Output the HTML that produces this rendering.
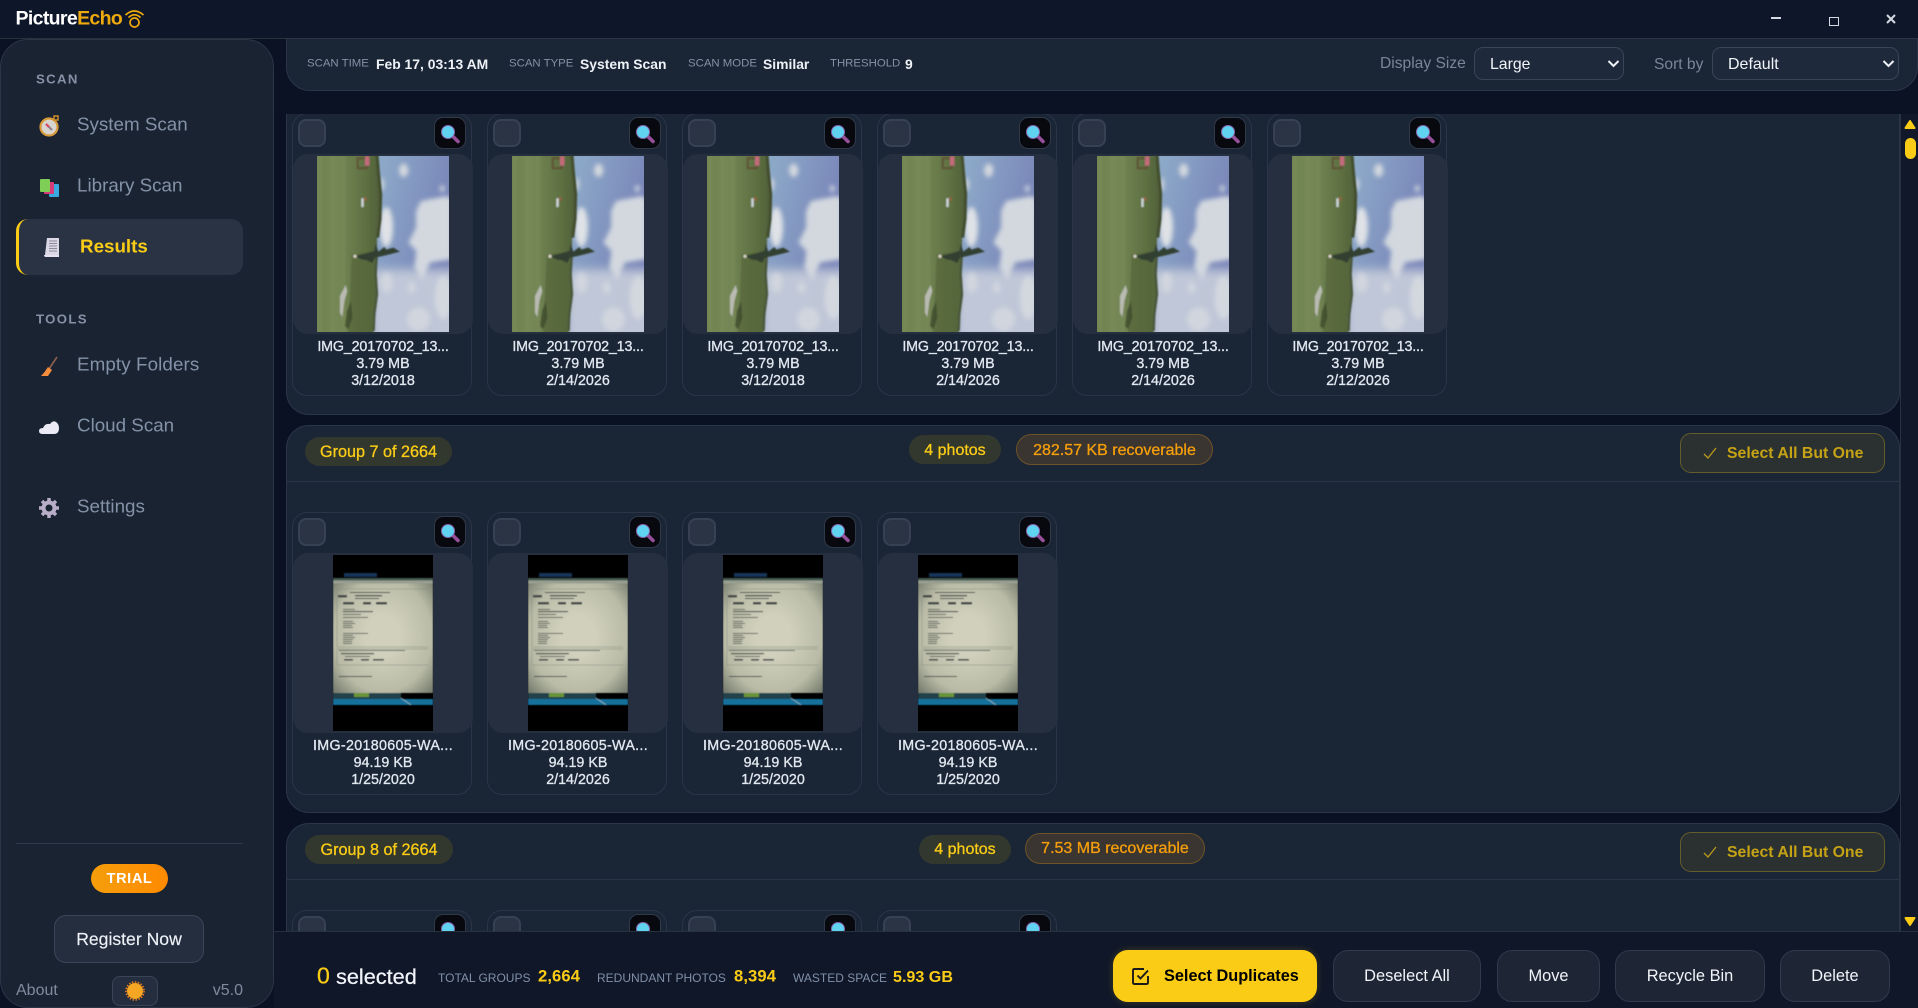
<!DOCTYPE html>
<html lang="en"><head><meta charset="utf-8"><title>PictureEcho</title>
<style>
html,body{margin:0;padding:0;background:#0b1223;width:1918px;height:1008px;overflow:hidden}
*{box-sizing:border-box}
body{font-family:"Liberation Sans",Arial,sans-serif;position:relative}
#frame{position:absolute;left:0;top:0;width:1918px;height:1008px;overflow:hidden}
.t{position:absolute;white-space:nowrap;line-height:1;transform:translateY(-50%)}
.a{position:absolute}
.nav{font-size:18.8px;color:#8492a8}
.lab{font-size:13.2px;font-weight:700;letter-spacing:1.35px;color:#8592a6}
.k{font-size:11.4px;color:#8592a6}
.v{font-size:13.9px;font-weight:700;color:#eef2f7}
.sel{position:absolute;top:47px;height:33px;background:#1e293b;border:1px solid #3a4658;border-radius:9px}
.g{position:absolute;left:286px;width:1614px;height:388px;background:#1a2536;border:1px solid #2a3648;border-radius:23px}
.g:after{content:"";position:absolute;left:0;right:0;top:55px;height:1px;background:#2a3648}
.pill{position:absolute;display:flex;align-items:center;justify-content:center;border-radius:16px;font-size:16px;padding-top:2px;white-space:nowrap;-webkit-text-stroke:.3px currentColor}
.gp{font-size:16.2px}
.py{background:#33382f;color:#facc15}
.po{background:#3a3530;color:#f59e0b;border:1px solid #6d5328}
.sa{position:absolute;width:205px;height:40px;background:#2b3130;border:1px solid #655c2b;border-radius:11px;color:#c6a215;font-size:15.8px;font-weight:700;white-space:nowrap}
.sa span{position:absolute;left:46px;top:20px;transform:translateY(-50%);line-height:1}
.sa svg{position:absolute;left:21px;top:12px}
.c{position:absolute;width:180px;height:283px;border:1px solid #2a3648;border-radius:15px;background:#1a2536}
.cb{position:absolute;left:5px;top:5px;width:28px;height:28px;background:#2a3445;border:2px solid #364254;border-radius:8px}
.z{position:absolute;left:141px;top:3px;width:32px;height:32px;background:#07090f;border:1px solid #30394a;border-radius:9px}
.z svg{position:absolute;left:-1px;top:-1px}
.bx{position:absolute;left:0;top:40px;width:180px;height:180px;background:#252f3f;border-radius:15px;}
.i{position:absolute;top:42px}
.l{position:absolute;left:-10px;width:200px;text-align:center;font-size:14.3px;line-height:17px;height:17px;color:#e2e8f0;-webkit-text-stroke:.3px #e2e8f0;white-space:nowrap}
.n1{letter-spacing:-.17px}
.n2{letter-spacing:.3px}
.b{position:absolute;top:950px;height:52px;background:#1e2535;border:1px solid #2f3a4c;border-radius:15px;color:#f1f5f9;font-size:16.4px;display:flex;align-items:center;justify-content:center;white-space:nowrap}
.s12{font-size:12px;color:#8090a8}
.y{font-size:16.6px;font-weight:700;color:#facc15}
</style></head>
<body>
<div id="frame">
<svg width="0" height="0" style="position:absolute">
<defs>
<filter id="b0" x="-5%" y="-5%" width="110%" height="110%"><feGaussianBlur stdDeviation="2.500"/></filter>
<filter id="b1" x="-30%" y="-30%" width="160%" height="160%"><feGaussianBlur stdDeviation="7"/></filter>
<filter id="b2" x="-30%" y="-30%" width="160%" height="160%"><feGaussianBlur stdDeviation="14"/></filter>
<filter id="b3" x="-5%" y="-5%" width="110%" height="110%"><feGaussianBlur stdDeviation=".5"/></filter>
<linearGradient id="sky" x1="0" y1="0" x2="1" y2=".3"><stop offset="0" stop-color="#b4c1d2"/><stop offset=".4" stop-color="#8fadca"/><stop offset="1" stop-color="#7884b8"/></linearGradient>
<linearGradient id="gr" x1="0" y1="0" x2="1" y2="0"><stop offset="0" stop-color="#6f8350"/><stop offset=".35" stop-color="#748755"/><stop offset=".75" stop-color="#5f7142"/><stop offset="1" stop-color="#4f5f38"/></linearGradient>
<radialGradient id="vg" cx=".5" cy=".5" r=".7"><stop offset=".25" stop-color="#d0d0bc"/><stop offset=".7" stop-color="#b9bba6"/><stop offset="1" stop-color="#737a6c"/></radialGradient>
<symbol id="land" viewBox="0 0 132 176" preserveAspectRatio="none">
<g transform="translate(-2 -1.7) scale(.33333)">
<rect x="0" y="0" width="410" height="540" fill="url(#sky)"/>
<g filter="url(#b2)"><path d="M170 345H430V560H170Z" fill="#c3cad9" opacity=".95"/></g>
<g filter="url(#b1)" fill="#d3d8df">
<ellipse cx="266" cy="48" rx="14" ry="20"/><ellipse cx="382" cy="103" rx="7" ry="10"/>
<path d="M318 140 395 125 410 135V315L345 325 322 378 298 340 304 290 280 265 303 220 303 170Z"/>
<ellipse cx="214" cy="218" rx="20" ry="60" fill="#dfe2e6"/><ellipse cx="200" cy="90" rx="7" ry="20"/>
<ellipse cx="385" cy="430" rx="26" ry="65"/><ellipse cx="290" cy="400" rx="12" ry="18" fill="#d0d5de"/><ellipse cx="215" cy="385" rx="18" ry="30" fill="#d0d5de"/><ellipse cx="310" cy="495" rx="35" ry="36" fill="#d0d5de"/>
</g>
<g filter="url(#b0)">
<path d="M0 0H185L190 50 198 130 196 200 186 250 186 300 182 360 186 420 180 480 175 540H0Z" fill="url(#gr)"/>
<path d="M110 300 184 290 182 420 175 540H100L105 420Z" fill="#55663a" opacity=".7"/>
<path d="M15 0V540M52 0V540M85 0V540" stroke="#8b9b63" stroke-width="14" opacity=".18"/>
<path d="M186 0 190 50 197 120 195 195 188 250" fill="none" stroke="#434e2e" stroke-width="9"/>
<path d="M186 290 182 360 186 420 178 480 176 530" fill="none" stroke="#48553a" stroke-width="7"/>
<path d="M128 12H155V42H128Z" fill="none" stroke="#5f5235" stroke-width="6"/>
<rect x="150" y="6" width="13" height="28" fill="#c46a7c"/>
<rect x="147" y="128" width="8" height="12" fill="#c0583f" opacity=".5"/>
<path d="M120 305 150 298 178 290 182 268 190 292 208 278 214 286 235 280 255 292 225 300 200 306 180 310 172 326 155 318 140 316Z" fill="#333f30"/>
<circle cx="120" cy="306" r="5" fill="#d8d3c7"/>
<rect x="139" y="132" width="7" height="26" fill="#cfd6dc"/>
<path d="M75 425 92 392 97 410 88 440 82 488 75 475Z" fill="#b9bbb2"/>
<path d="M96 470 108 440 112 490 100 525 90 515Z" fill="#3d4a2c" opacity=".8"/>
</g>
</g>
</symbol>
<symbol id="doc" viewBox="0 0 100 176" preserveAspectRatio="none">
<rect width="100" height="176" fill="#000"/>
<g filter="url(#b3)">
<rect x="11" y="18" width="33" height="4" fill="#123458"/>
<rect y="23" width="100" height="115" fill="url(#vg)"/>
<rect y="23" width="100" height="2.500" fill="#445a52"/>
<rect y="25.500" width="100" height="3" fill="#989f90"/>
<path d="M4 34H95M4 34V92H95M4 94H95M4 94V110H95" fill="none" stroke="#858e83" stroke-width=".5"/>
<g fill="#444949">
<rect x="17" y="37" width="40" height="1"/><rect x="5" y="40" width="9" height="2.500"/><rect x="22" y="40" width="27" height="1.300"/><rect x="22" y="43" width="24" height="1"/>
<rect x="10" y="47" width="11" height="2.500"/><rect x="30" y="47" width="8" height="2.500"/><rect x="43" y="47" width="11" height="2.500"/>
<rect x="10" y="54" width="12" height=".8"/><rect x="10" y="56" width="30" height="1.100"/><rect x="10" y="59" width="18" height=".8"/>
<rect x="10" y="62" width="25" height=".8"/><rect x="10" y="66" width="10" height=".8"/><rect x="10" y="68" width="12" height=".8"/><rect x="10" y="70" width="9" height=".8"/><rect x="10" y="72" width="10" height=".8"/>
<rect x="10" y="78" width="25" height=".8"/><rect x="10" y="80" width="10" height=".8"/><rect x="10" y="82" width="12" height=".8"/><rect x="10" y="84" width="10" height=".8"/><rect x="10" y="86" width="9" height=".8"/><rect x="10" y="88" width="9" height=".8"/>
<rect x="6" y="95" width="66" height=".8"/><rect x="8" y="98" width="33" height="1.200"/><rect x="12" y="101" width="25" height=".8"/>
<rect x="11" y="104" width="9" height="1.600"/><rect x="28" y="104" width="8" height="1.600"/><rect x="40" y="104" width="11" height="1.600"/>
<rect x="6" y="121" width="33" height="1"/>
</g>
<rect y="138" width="68" height="6" fill="#24434c"/>
<rect x="21" y="138" width="15" height="4" fill="#6b9438"/>
<rect y="144" width="100" height="6" fill="#17709c"/>
<path d="M68 143 78 150" stroke="#8fb4c2" stroke-width=".8"/>
</g>
</symbol>
<symbol id="mag" viewBox="0 0 32 32">
<path d="M19 19.500 24 24.500" stroke="#96509a" stroke-width="3.600" stroke-linecap="round"/>
<circle cx="14" cy="15" r="6.500" fill="#5fd3f0" stroke="#8a66b0" stroke-width="1"/>
</symbol>
</defs>
</svg>

<!-- scroll content -->
<div class="a" style="left:0;top:0;width:1900px;height:931px;overflow:hidden;clip-path:inset(114px 0 0 0)">
<div class="a" style="left:274px;top:114px;width:1626px;height:817px;background:#0a1122"></div>
<div class="g" style="top:27px"></div>
<div class="g" style="top:425px"></div>
<div class="g" style="top:823px;height:140px"></div>

<div class="c" style="left:292px;top:113px"><div class="cb"></div><div class="z"><svg width="32" height="32"><use href="#mag"/></svg></div><div class="bx"></div><svg class="i" style="left:24px" width="132" height="176"><use href="#land" width="132" height="176"/></svg><div class="l n1" style="top:225px">IMG_20170702_13...</div><div class="l" style="top:242px">3.79 MB</div><div class="l" style="top:259px">3/12/2018</div></div>
<div class="c" style="left:487px;top:113px"><div class="cb"></div><div class="z"><svg width="32" height="32"><use href="#mag"/></svg></div><div class="bx"></div><svg class="i" style="left:24px" width="132" height="176"><use href="#land" width="132" height="176"/></svg><div class="l n1" style="top:225px">IMG_20170702_13...</div><div class="l" style="top:242px">3.79 MB</div><div class="l" style="top:259px">2/14/2026</div></div>
<div class="c" style="left:682px;top:113px"><div class="cb"></div><div class="z"><svg width="32" height="32"><use href="#mag"/></svg></div><div class="bx"></div><svg class="i" style="left:24px" width="132" height="176"><use href="#land" width="132" height="176"/></svg><div class="l n1" style="top:225px">IMG_20170702_13...</div><div class="l" style="top:242px">3.79 MB</div><div class="l" style="top:259px">3/12/2018</div></div>
<div class="c" style="left:877px;top:113px"><div class="cb"></div><div class="z"><svg width="32" height="32"><use href="#mag"/></svg></div><div class="bx"></div><svg class="i" style="left:24px" width="132" height="176"><use href="#land" width="132" height="176"/></svg><div class="l n1" style="top:225px">IMG_20170702_13...</div><div class="l" style="top:242px">3.79 MB</div><div class="l" style="top:259px">2/14/2026</div></div>
<div class="c" style="left:1072px;top:113px"><div class="cb"></div><div class="z"><svg width="32" height="32"><use href="#mag"/></svg></div><div class="bx"></div><svg class="i" style="left:24px" width="132" height="176"><use href="#land" width="132" height="176"/></svg><div class="l n1" style="top:225px">IMG_20170702_13...</div><div class="l" style="top:242px">3.79 MB</div><div class="l" style="top:259px">2/14/2026</div></div>
<div class="c" style="left:1267px;top:113px"><div class="cb"></div><div class="z"><svg width="32" height="32"><use href="#mag"/></svg></div><div class="bx"></div><svg class="i" style="left:24px" width="132" height="176"><use href="#land" width="132" height="176"/></svg><div class="l n1" style="top:225px">IMG_20170702_13...</div><div class="l" style="top:242px">3.79 MB</div><div class="l" style="top:259px">2/12/2026</div></div>

<div class="pill py gp" style="left:305px;top:437px;width:147px;height:29px">Group 7 of 2664</div>
<div class="pill py" style="left:909px;top:435px;width:92px;height:29px">4 photos</div>
<div class="pill po" style="left:1016px;top:434px;width:197px;height:31px">282.57 KB recoverable</div>
<div class="sa" style="left:1680px;top:433px"><svg width="16" height="14" viewBox="0 0 16 14"><path d="M2 8 6 12 14 2" fill="none" stroke="#b8991c" stroke-width="1.300"/></svg><span>Select All But One</span></div>

<div class="c" style="left:292px;top:512px"><div class="cb"></div><div class="z"><svg width="32" height="32"><use href="#mag"/></svg></div><div class="bx"></div><svg class="i" style="left:40px" width="100" height="176"><use href="#doc" width="100" height="176"/></svg><div class="l n2" style="top:225px">IMG-20180605-WA...</div><div class="l" style="top:242px">94.19 KB</div><div class="l" style="top:259px">1/25/2020</div></div>
<div class="c" style="left:487px;top:512px"><div class="cb"></div><div class="z"><svg width="32" height="32"><use href="#mag"/></svg></div><div class="bx"></div><svg class="i" style="left:40px" width="100" height="176"><use href="#doc" width="100" height="176"/></svg><div class="l n2" style="top:225px">IMG-20180605-WA...</div><div class="l" style="top:242px">94.19 KB</div><div class="l" style="top:259px">2/14/2026</div></div>
<div class="c" style="left:682px;top:512px"><div class="cb"></div><div class="z"><svg width="32" height="32"><use href="#mag"/></svg></div><div class="bx"></div><svg class="i" style="left:40px" width="100" height="176"><use href="#doc" width="100" height="176"/></svg><div class="l n2" style="top:225px">IMG-20180605-WA...</div><div class="l" style="top:242px">94.19 KB</div><div class="l" style="top:259px">1/25/2020</div></div>
<div class="c" style="left:877px;top:512px"><div class="cb"></div><div class="z"><svg width="32" height="32"><use href="#mag"/></svg></div><div class="bx"></div><svg class="i" style="left:40px" width="100" height="176"><use href="#doc" width="100" height="176"/></svg><div class="l n2" style="top:225px">IMG-20180605-WA...</div><div class="l" style="top:242px">94.19 KB</div><div class="l" style="top:259px">1/25/2020</div></div>

<div class="pill py gp" style="left:305px;top:835px;width:148px;height:29px;padding-top:1px">Group 8 of 2664</div>
<div class="pill py" style="left:919px;top:835px;width:92px;height:29px;padding-top:1px">4 photos</div>
<div class="pill po" style="left:1025px;top:833px;width:180px;height:31px;padding-top:1px">7.53 MB recoverable</div>
<div class="sa" style="left:1680px;top:832px"><svg width="16" height="14" viewBox="0 0 16 14"><path d="M2 8 6 12 14 2" fill="none" stroke="#b8991c" stroke-width="1.300"/></svg><span>Select All But One</span></div>

<div class="c" style="left:292px;top:910px;height:60px"><div class="cb"></div><div class="z"><svg width="32" height="32"><use href="#mag"/></svg></div></div>
<div class="c" style="left:487px;top:910px;height:60px"><div class="cb"></div><div class="z"><svg width="32" height="32"><use href="#mag"/></svg></div></div>
<div class="c" style="left:682px;top:910px;height:60px"><div class="cb"></div><div class="z"><svg width="32" height="32"><use href="#mag"/></svg></div></div>
<div class="c" style="left:877px;top:910px;height:60px"><div class="cb"></div><div class="z"><svg width="32" height="32"><use href="#mag"/></svg></div></div>
</div>

<!-- scrollbar -->
<div class="a" style="left:1900px;top:114px;width:18px;height:817px;background:#101829;border-left:1px solid #27323f"></div>
<svg class="a" style="left:1904px;top:119px" width="12" height="11"><path d="M6 2 10.500 9H1.500Z" fill="#facc15" stroke="#facc15" stroke-width="2" stroke-linejoin="round"/></svg>
<div class="a" style="left:1905px;top:138px;width:11px;height:21px;border-radius:6px;background:#facc15"></div>
<svg class="a" style="left:1904px;top:916px" width="12" height="11"><path d="M6 9 10.500 2H1.500Z" fill="#facc15" stroke="#facc15" stroke-width="2" stroke-linejoin="round"/></svg>

<!-- bottom bar -->
<div class="a" style="left:274px;top:931px;width:1644px;height:77px;background:#0f1729;border-top:1px solid #27323f"></div>
<div class="t" style="left:317px;top:976px;font-size:23px;color:#facc15;-webkit-text-stroke:.3px #facc15">0</div>
<div class="t" style="left:336px;top:977px;font-size:21.7px;color:#f1f5f9;-webkit-text-stroke:.25px #f1f5f9">selected</div>
<div class="t s12" style="left:438px;top:978px">TOTAL GROUPS</div>
<div class="t y" style="left:538px;top:977px;letter-spacing:.1px">2,664</div>
<div class="t s12" style="left:597px;top:978px">REDUNDANT PHOTOS</div>
<div class="t y" style="left:734px;top:977px;letter-spacing:.1px">8,394</div>
<div class="t s12" style="left:793px;top:978px">WASTED SPACE</div>
<div class="t y" style="left:893px;top:977px;font-size:16.100px">5.93 GB</div>
<div class="b" style="left:1113px;width:204px;background:#facc15;border-color:#facc15;color:#000;font-weight:700;box-shadow:0 0 8px rgba(250,204,21,.2)"><svg class="a" style="left:16px;top:14px" width="22" height="22" viewBox="0 0 22 22"><path d="M18 11V17.500Q18 19 16.500 19H4.500Q3 19 3 17.500V5.500Q3 4 4.500 4H14" fill="none" stroke="#1a1a1a" stroke-width="1.900"/><path d="M7.500 10.500 10.500 13.500 18 5.500" fill="none" stroke="#1a1a1a" stroke-width="1.900"/></svg><span style="position:absolute;left:50px;font-size:16.300px">Select Duplicates</span></div>
<div class="b" style="left:1333px;width:148px">Deselect All</div>
<div class="b" style="left:1497px;width:103px">Move</div>
<div class="b" style="left:1615px;width:150px">Recycle Bin</div>
<div class="b" style="left:1780px;width:110px">Delete</div>

<!-- title bar -->
<div class="a" style="left:0;top:0;width:1918px;height:39px;background:#0e162a;border-bottom:1px solid #27323f"></div>
<div class="t" style="left:15.500px;top:19px;font-size:19.500px;font-weight:700;letter-spacing:-.65px;color:#fff">Picture<span style="color:#eeaa0c">Echo</span></div>
<svg class="a" style="left:124px;top:8px" width="21" height="21" viewBox="0 0 21 21" fill="none" stroke="#eeaa0c" stroke-width="1.700"><path d="M1.500 7Q10.500-1 19.500 7M4.500 9.500Q10.500 4 16.500 9.500"/><circle cx="10.500" cy="14.500" r="4.500"/></svg>
<div class="a" style="left:1771px;top:17px;width:10px;height:2px;background:#d5dae2"></div>
<div class="a" style="left:1829px;top:17px;width:10px;height:9px;border:1.500px solid #d5dae2"></div>
<svg class="a" style="left:1886px;top:14px" width="10" height="10"><path d="M1 1 9 9M9 1 1 9" stroke="#d5dae2" stroke-width="2"/></svg>

<!-- toolbar -->
<div class="a" style="left:286px;top:38px;width:1632px;height:53px;overflow:hidden"><div class="a" style="left:0;top:0;width:1632px;height:53px;background:#1a2536;border:1px solid #2a3648;border-radius:0 0 24px 24px"></div></div>
<div class="t k" style="left:307px;top:64px">SCAN TIME</div><div class="t v" style="left:376px;top:65px">Feb 17, 03:13 AM</div>
<div class="t k" style="left:509px;top:64px">SCAN TYPE</div><div class="t v" style="left:580px;top:65px">System Scan</div>
<div class="t k" style="left:688px;top:64px">SCAN MODE</div><div class="t v" style="left:763px;top:65px">Similar</div>
<div class="t k" style="left:830px;top:64px">THRESHOLD</div><div class="t v" style="left:905px;top:65px">9</div>
<div class="t" style="left:1380px;top:64px;font-size:15.600px;color:#7a8799">Display Size</div>
<div class="sel" style="left:1474px;width:150px"><svg class="a" style="left:132px;top:11px" width="13" height="10"><path d="M1.500 2 6.500 7 11.500 2" fill="none" stroke="#eef2f7" stroke-width="2"/></svg></div>
<div class="t" style="left:1490px;top:64.500px;font-size:15.800px;color:#f1f5f9">Large</div>
<div class="t" style="left:1654px;top:64.500px;font-size:15.600px;color:#7a8799">Sort by</div>
<div class="sel" style="left:1712px;width:187px"><svg class="a" style="left:169px;top:11px" width="13" height="10"><path d="M1.500 2 6.500 7 11.500 2" fill="none" stroke="#eef2f7" stroke-width="2"/></svg></div>
<div class="t" style="left:1728px;top:64.500px;font-size:16px;color:#f1f5f9">Default</div>

<!-- sidebar -->
<div class="a" style="left:0;top:39px;width:274px;height:969px;overflow:hidden"><div class="a" style="left:0;top:0;width:274px;height:969px;background:#1a2332;border:1px solid #2a3547;border-radius:28px"></div></div>
<div class="t lab" style="left:36px;top:79px">SCAN</div>
<svg class="a" style="left:38px;top:114px" width="22" height="24" viewBox="0 0 22 24"><circle cx="11" cy="13" r="8.500" fill="#d8d4cf" stroke="#d99a3a" stroke-width="2.200"/><rect x="16" y="2" width="4" height="4" fill="none" stroke="#c98c2a" stroke-width="1.500"/><path d="M8 10 14 16" stroke="#8c858c" stroke-width="2.200"/><path d="M8 10 11 13" stroke="#dd4a6a" stroke-width="2.200"/></svg>
<div class="t nav" style="left:77px;top:125px">System Scan</div>
<svg class="a" style="left:40px;top:179px" width="20" height="19" viewBox="0 0 20 19"><rect x="9" y="5" width="10" height="13" rx="1" fill="#3aa9e0"/><rect x="4" y="3" width="10" height="12" rx="1" fill="#d63c78"/><rect x="0" y="0" width="10" height="13" rx="1" fill="#7fce55"/></svg>
<div class="t nav" style="left:77px;top:186px">Library Scan</div>
<div class="a" style="left:16px;top:219px;width:227px;height:56px;background:#2a3344;border-left:3px solid #facc15;border-radius:12px"></div>
<svg class="a" style="left:44px;top:238px" width="16" height="20" viewBox="0 0 16 20"><path d="M3 0H15V17H1Z" fill="#dcd8e6"/><path d="M5 3H13M5 5.500H13M5 8H13M5 10.500H13M5 13H13" stroke="#8d8b9b" stroke-width="1"/><path d="M0 17H15V19H2Q0 19 0 17Z" fill="#e8e2f0"/></svg>
<div class="t" style="left:80px;top:246.500px;font-size:18.800px;font-weight:700;color:#facc15">Results</div>
<div class="t lab" style="left:36px;top:319px">TOOLS</div>
<svg class="a" style="left:40px;top:356px" width="18" height="21" viewBox="0 0 18 21"><path d="M17 1 9 13" stroke="#8f5f50" stroke-width="1.600"/><path d="M8 11 12 14 8 20H1Q5 16 8 11Z" fill="#f68d3d"/></svg>
<div class="t nav" style="left:77px;top:365px;letter-spacing:.1px">Empty Folders</div>
<svg class="a" style="left:39px;top:420px" width="20" height="15" viewBox="0 0 20 15"><path d="M4 14Q0 14 0 11 0 8 4 8 6 3 11 4 14 0 17 2 20 4 20 8 20 14 15 14Z" fill="#ecebf5"/></svg>
<div class="t nav" style="left:77px;top:426px">Cloud Scan</div>
<svg class="a" style="left:39px;top:498px" width="20" height="20" viewBox="0 0 20 20"><circle cx="10" cy="10" r="5.500" fill="none" stroke="#b9aec9" stroke-width="4"/><g stroke="#b9aec9" stroke-width="3.500"><path d="M10 0V4M10 16V20M0 10H4M16 10H20M3 3 5.800 5.800M14.200 14.200 17 17M17 3 14.200 5.800M5.800 14.200 3 17"/></g></svg>
<div class="t nav" style="left:77px;top:507px">Settings</div>
<div class="a" style="left:16px;top:843px;width:227px;height:1px;background:#2e3a4c"></div>
<div class="a" style="left:91px;top:864px;width:77px;height:29px;border-radius:15px;background:linear-gradient(90deg,#f59e0b,#ff8a00);color:#fff;font-size:14.500px;font-weight:700;letter-spacing:.6px;display:flex;align-items:center;justify-content:center">TRIAL</div>
<div class="a" style="left:54px;top:915px;width:150px;height:48px;background:#252e3f;border:1px solid #3a4557;border-radius:12px;color:#eef2f7;font-size:17.600px;-webkit-text-stroke:.15px #eef2f7;display:flex;align-items:center;justify-content:center">Register Now</div>
<div class="t" style="left:16px;top:991px;font-size:16px;color:#7f8b9d">About</div>
<div class="a" style="left:112px;top:976px;width:46px;height:30px;background:#252e3f;border:1px solid #3a4557;border-radius:8px"></div>
<svg class="a" style="left:125px;top:981px" width="20" height="20" viewBox="0 0 20 20"><circle cx="10" cy="10" r="8" fill="#f5a623"/><circle cx="10" cy="10" r="9" fill="none" stroke="#ef7f1a" stroke-width="1.600" stroke-dasharray="1.500 1.500"/></svg>
<div class="t" style="right:1675px;top:991px;font-size:16px;color:#7f8b9d">v5.0</div>
</div>
</body></html>
